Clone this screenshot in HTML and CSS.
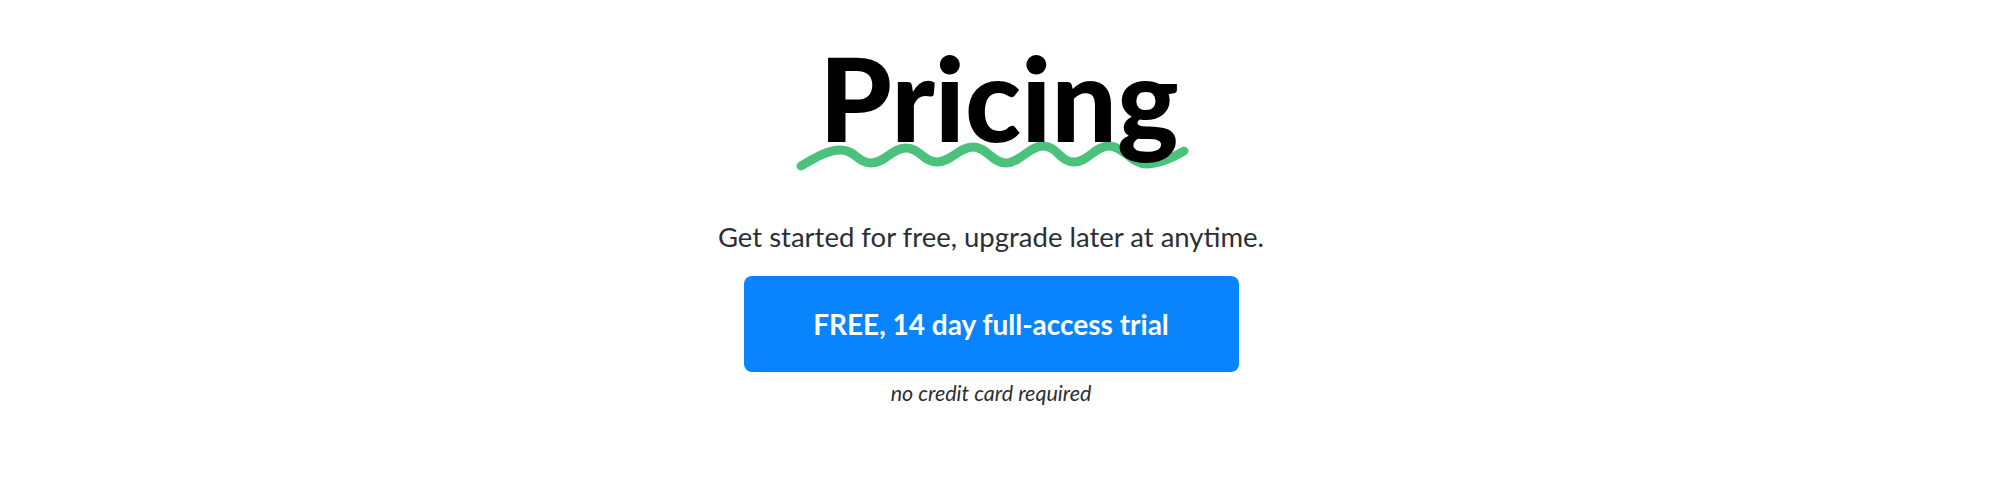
FILE: index.html
```html
<!DOCTYPE html>
<html lang="en">
<head>
<meta charset="utf-8">
<title>Pricing</title>
<link rel="stylesheet" href="styles.css">
</head>
<body>
<section class="pricing-hero">
  <div class="title-wrap">
    <svg class="squiggle" width="400" height="40" viewBox="0 0 400 40" aria-hidden="true">
      <path d="M5,27 C20,18 32,11 45,11 C59,11 62,24 75,24 C89,24 96,9 110,9 C124,9 127,23 141,23 C155,23 163,8 177,8 C191,8 196,24 210,24 C224,24 233,7 247,7 C261,7 264,23 278,23 C292,23 299,7 313,7 C327,7 336,25 350,25 C364,25 378,18 388,12" fill="none" stroke="#4ac27b" stroke-width="9" stroke-linecap="round" stroke-linejoin="round"/>
    </svg>
    <h1 class="title">Pricing</h1>
  </div>
  <p class="subtitle">Get started for free, upgrade later at anytime.</p>
  <a class="cta" href="#">FREE, 14 day full-access trial</a>
  <p class="note">no credit card required</p>
</section>
</body>
</html>
```
FILE: styles.css
```css
html, body {
  margin: 0;
  padding: 0;
  background: #ffffff;
}

body {
  font-family: Lato, "Open Sans", "Liberation Sans", sans-serif;
  color: #2b2f33;
}

.pricing-hero {
  display: flex;
  flex-direction: column;
  align-items: center;
  padding: 40px 18px 0 0;
}

.title-wrap {
  position: relative;
  margin-left: 16px;
}

.title {
  position: relative;
  z-index: 1;
  margin: 0;
  font-size: 116px;
  line-height: 1;
  font-weight: 900;
  color: #000;
}

.squiggle {
  position: absolute;
  left: -23px;
  top: 99px;
  z-index: 0;
}

.subtitle {
  margin: 64px 0 0;
  font-size: 27.5px;
  line-height: 33px;
  font-weight: 400;
  color: #2b2f33;
}

.cta {
  display: flex;
  align-items: center;
  justify-content: center;
  box-sizing: border-box;
  width: 495px;
  height: 96px;
  margin-top: 23px;
  border-radius: 8px;
  background: #0a84fd;
  color: #ffffff;
  font-size: 28px;
  font-weight: 700;
  text-decoration: none;
}

.note {
  margin: 8px 0 0;
  font-size: 21.5px;
  line-height: 26px;
  font-style: italic;
  color: #2b2f33;
}
```
